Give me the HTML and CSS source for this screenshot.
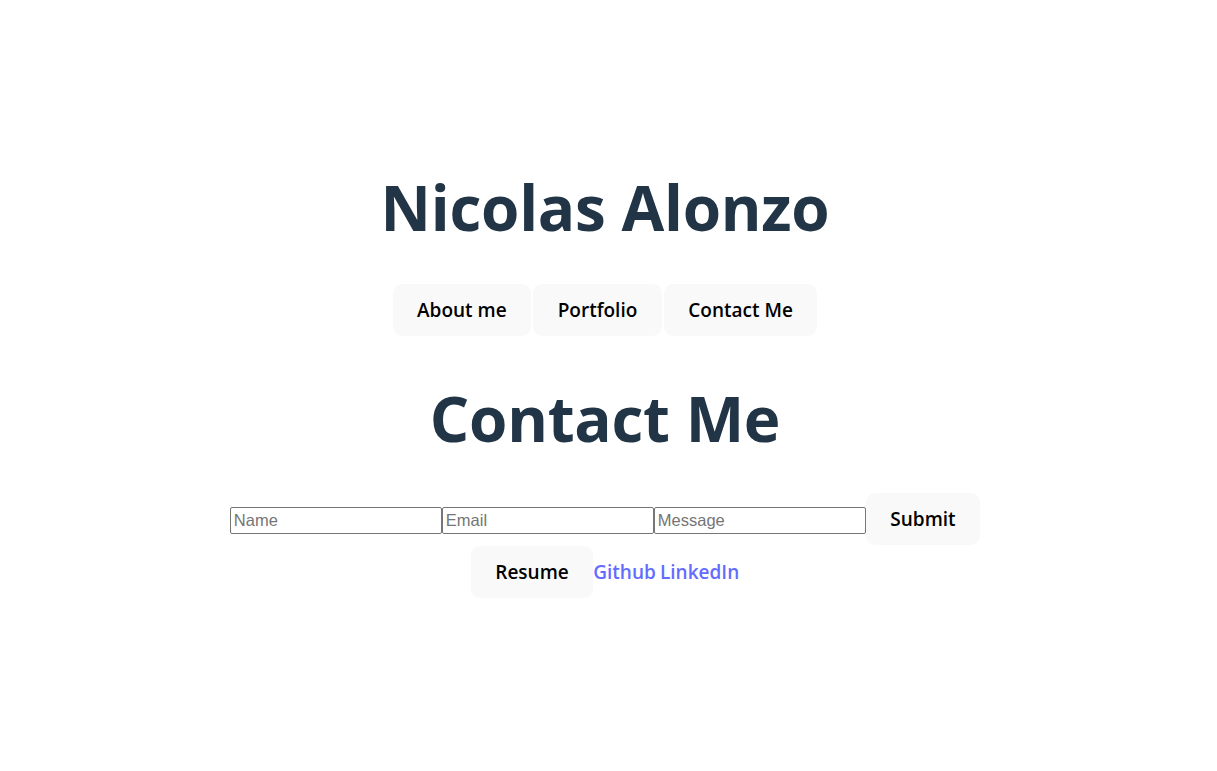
FILE: index.html
```html
<!DOCTYPE html>
<html lang="en">
<head>
<meta charset="utf-8">
<title>Nicolas Alonzo</title>
<link rel="stylesheet" href="styles.css">
</head>
<body>
<div class="app">
  <header class="header">
    <h1 class="title">Nicolas Alonzo</h1>
    <nav class="nav">
      <button class="btn">About me</button>
      <button class="btn">Portfolio</button>
      <button class="btn">Contact Me</button>
    </nav>
  </header>
  <section class="contact">
    <h2 class="section-title">Contact Me</h2>
    <form class="form">
      <input class="field" type="text" placeholder="Name">
      <input class="field" type="email" placeholder="Email">
      <input class="field" type="text" placeholder="Message">
      <button class="btn" type="button">Submit</button>
    </form>
  </section>
  <footer class="footer">
    <button class="btn">Resume</button>
    <span class="links"><a href="#" class="link">Github</a> <a href="#" class="link">LinkedIn</a></span>
  </footer>
</div>
</body>
</html>
```
FILE: styles.css
```css
html, body {
  margin: 0;
  padding: 0;
}
body {
  box-sizing: border-box;
  font-family: "Open Sans", "Noto Sans", sans-serif;
  color: #213547;
  background: #ffffff;
  display: flex;
  align-items: center;
  justify-content: center;
  min-height: 100vh;
  padding-right: 7px;
}
.app {
  text-align: center;
}
.header {
  display: flex;
  flex-direction: column;
  align-items: center;
}
.title {
  font-size: 62px;
  font-weight: 700;
  line-height: 68px;
  margin: 0 0 43px;
  letter-spacing: -0.25px;
}
.nav {
  display: flex;
  gap: 2px;
  justify-content: center;
}
.btn {
  font-family: "Open Sans", "Noto Sans", sans-serif;
  font-size: 19px;
  font-weight: 600;
  line-height: 28px;
  color: #000;
  background: #f9f9f9;
  border: 1px solid transparent;
  border-radius: 9px;
  padding: 11px 23.5px;
  cursor: pointer;
}
.section-title {
  font-size: 62px;
  font-weight: 700;
  line-height: 68px;
  margin: 48px 0 41px;
  letter-spacing: -0.25px;
}
.form {
  display: flex;
  align-items: baseline;
  justify-content: center;
}
.field {
  box-sizing: border-box;
  width: 212px;
  height: 27px;
  font-family: "Liberation Sans", Arial, sans-serif;
  font-size: 16.5px;
  padding: 1px 3px;
  border: 1px solid #767676;
  border-radius: 2px;
  margin: 0;
  color: #000;
}
.field::placeholder {
  color: #757575;
}
.footer {
  display: flex;
  align-items: baseline;
  justify-content: center;
  margin-top: 1px;
}
.link {
  font-size: 19px;
  font-weight: 600;
  color: #646cff;
  text-decoration: none;
}
```
